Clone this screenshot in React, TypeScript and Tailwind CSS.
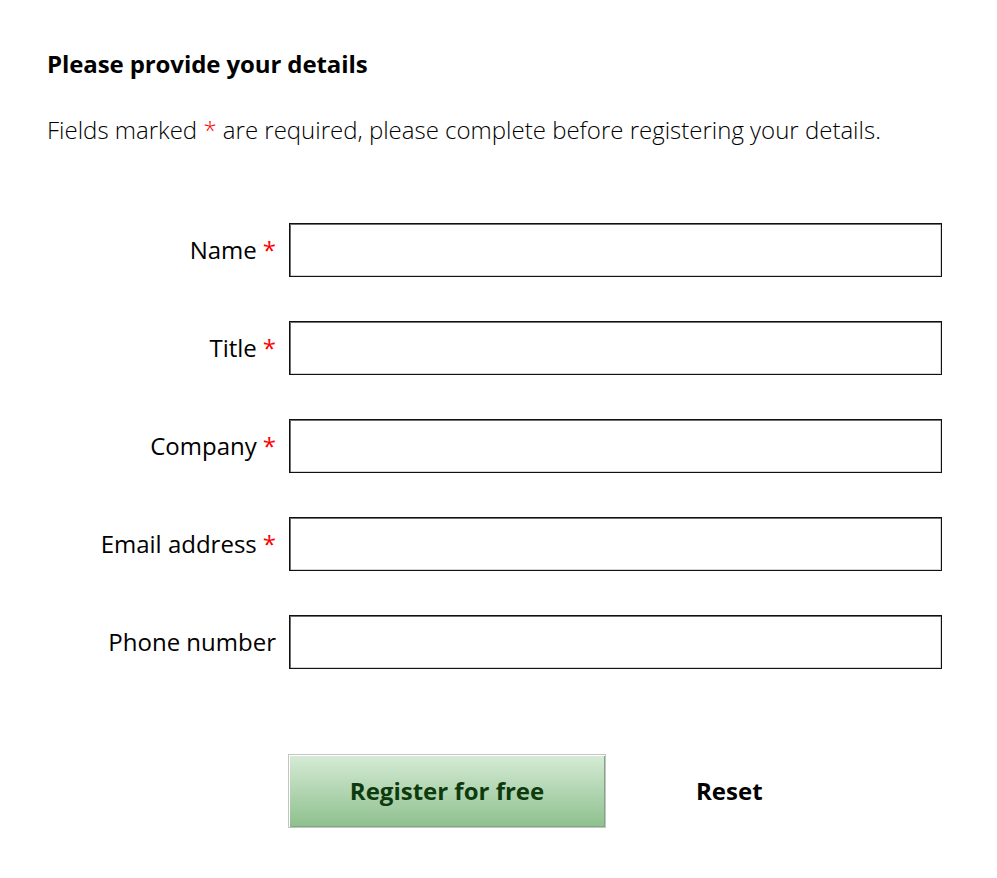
import React from "react";

const fields = [
    { label: "Name", required: true },
    { label: "Title", required: true },
    { label: "Company", required: true },
    { label: "Email address", required: true },
    { label: "Phone number", required: false },
];

export default function App() {
    return (
        <div className="min-h-screen bg-white text-black font-['Open_Sans',sans-serif] pl-[47px] pt-[46px]">
            {/* Heading */}
            <h2 className="text-[24px] font-bold leading-[36px] tracking-[-0.1px]">Please provide your details</h2>
            <p className="mt-[30px] text-[24px] font-light leading-[36px]">
                Fields marked <span className="text-[#ff0000]">*</span> are required, please complete before registering your details.
            </p>

            {/* Form rows */}
            <div className="mt-[75px] flex flex-col gap-[44px]">
                {fields.map((f) => (
                    <div key={f.label} className="flex items-center">
                        <label className="w-[230px] text-right text-[24px] leading-[30px] pr-px">
                            {f.label}
                            {f.required && <span className="text-[#ff0000] ml-[6px]">*</span>}
                        </label>
                        <input
                            type="text"
                            className="ml-[12px] w-[653px] h-[54px] bg-white border border-[#111111] shadow-[inset_1px_1px_0_#6e6e6e,inset_-1px_-1px_0_#d4d4d4] outline-none px-2"
                        />
                    </div>
                ))}
            </div>

            {/* Actions */}
            <div className="mt-[85px] ml-[241px] flex items-center">
                <button className="w-[318px] h-[74px] border border-[#c4c4c4] shadow-[inset_1px_1px_0_#ffffff,inset_-1px_-1px_0_#7fa97f] bg-gradient-to-b from-[#d6ebd6] to-[#8ec08e] text-[#0d3b0d] text-[24px] font-bold">
                    Register for free
                </button>
                <button className="ml-[90px] text-[24px] font-bold">Reset</button>
            </div>
        </div>
    );
}
